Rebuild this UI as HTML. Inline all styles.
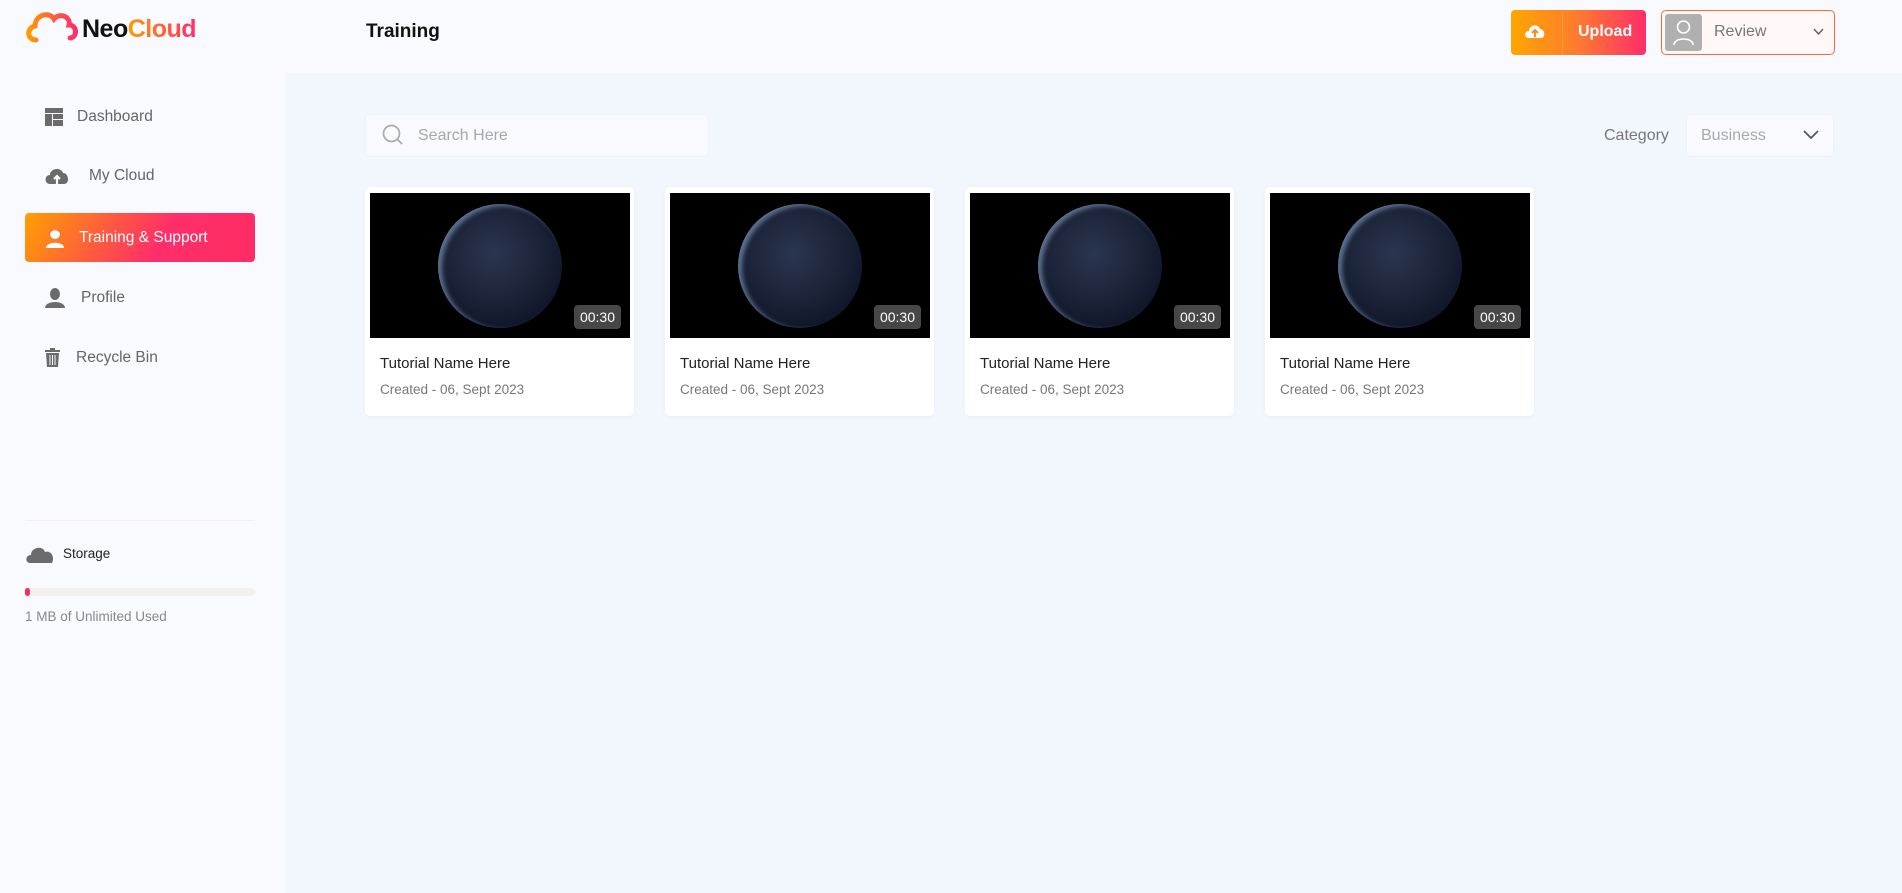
<!DOCTYPE html>
<html><head><meta charset="utf-8"><style>
*{margin:0;padding:0;box-sizing:border-box}
body{width:1902px;height:893px;background:#f8faff;font-family:"Liberation Sans",sans-serif;position:relative;overflow:hidden;color:#222}
.abs{position:absolute}
.main{left:285px;top:73px;width:1617px;height:820px;background:#f2f6fd}
.menu{left:45px;font-size:15.5px;color:#666;display:flex;align-items:center}
.menu svg{margin-right:14px}
.card{width:269px;height:229px;background:#fff;border-radius:5px;box-shadow:0 1px 4px rgba(0,0,0,.04);top:187px}
.img{left:5px;top:6px;width:260px;height:145px;background:#000;overflow:hidden}
.globe{position:absolute;left:68px;top:11px;width:124px;height:124px;border-radius:50%;background:radial-gradient(circle at 45% 40%,#2a3550 0%,#1c2439 45%,#10162a 75%,#050609 100%);box-shadow:4px 2px 5px rgba(150,180,220,.55) inset}
.badge{position:absolute;right:9px;bottom:9px;background:#474747;color:#fff;font-size:14px;padding:4px 6px;border-radius:4px}
.t{position:absolute;left:15px;top:168px;font-size:15px;color:#222}
.d{position:absolute;left:15px;top:195px;font-size:13.5px;color:#777}
</style></head><body>
<div class="abs main"></div>
<svg class="abs" style="left:24px;top:7px" width="56" height="38" viewBox="0 0 56 38"><defs><linearGradient id="lg" x1="0" x2="1"><stop offset="0" stop-color="#ff9a00"/><stop offset="1" stop-color="#ff2d6a"/></linearGradient></defs><path d="M12 33 C3 33 2 21 11 19 C11 8 25 4 30 12 C36 5 47 10 45 18 C53 18 54 30 46 31" fill="none" stroke="url(#lg)" stroke-width="5" stroke-linecap="round"/><path d="M14 30 H44" stroke="url(#lg)" stroke-width="4" opacity=".6"/></svg>
<div class="abs" style="left:82px;top:15px;font-size:25px;font-weight:bold;letter-spacing:-0.5px"><span style="color:#111">Neo</span><span style="background:linear-gradient(90deg,#ff9a00,#ff2d6a);-webkit-background-clip:text;color:transparent">Cloud</span></div>
<div class="abs" style="left:366px;top:21px;font-size:19px;font-weight:bold;color:#111">Training</div>
<div class="abs" style="left:1511px;top:10px;width:135px;height:45px;border-radius:4px;background:linear-gradient(90deg,#ffa600,#ff7a30 50%,#ff2d6a)"></div>
<div class="abs" style="left:1562px;top:10px;width:1px;height:45px;background:#f5a020"></div>
<svg class="abs" style="left:1524px;top:22px" width="22" height="18" viewBox="0 0 22 18"><path d="M5 16 C0 16 0 9 5 9 C5 3 14 1 16 7 C21 7 22 16 17 16 Z" fill="#fff"/><path d="M11 15 V9 M8 11 L11 8 L14 11" stroke="#ff8a20" stroke-width="2" fill="none"/></svg>
<div class="abs" style="left:1578px;top:23px;color:#fff;font-weight:bold;font-size:16px">Upload</div>
<div class="abs" style="left:1661px;top:10px;width:174px;height:45px;border:1.5px solid #ff6a3a;border-radius:5px;background:#fff8f6"></div>
<div class="abs" style="left:1665px;top:14px;width:37px;height:37px;background:#b0b0b0;border-radius:3px"></div>
<svg class="abs" style="left:1672px;top:19px" width="23" height="27" viewBox="0 0 23 27"><circle cx="11.5" cy="8" r="6" fill="none" stroke="#fff" stroke-width="1.6"/><path d="M2 26 C2 18 21 18 21 26" fill="none" stroke="#fff" stroke-width="1.6"/></svg>
<div class="abs" style="left:1714px;top:23px;font-size:16px;color:#777">Review</div>
<svg class="abs" style="left:1813px;top:28px" width="11" height="8" viewBox="0 0 11 8"><path d="M1 1 L5.5 6 L10 1" fill="none" stroke="#666" stroke-width="1.5"/></svg>
<div class="abs menu" style="top:108px"><svg width="18" height="18" viewBox="0 0 18 18" fill="#6b6b6b"><rect x="0" y="0" width="18" height="5"/><rect x="0" y="6" width="7" height="12"/><rect x="8" y="6" width="10" height="5"/><rect x="8" y="12" width="10" height="6"/></svg>Dashboard</div>
<div class="abs menu" style="top:167px"><svg width="24" height="18" viewBox="0 0 24 18"><path d="M5 17 C-1 17 -1 8 5 8 C5 1 16 0 18 6 C24 6 25 17 19 17 Z" fill="#6b6b6b"/><path d="M12 17 V10 M9 12 L12 9 L15 12" stroke="#f8faff" stroke-width="2.2" fill="none"/></svg><span style="margin-left:6px">My Cloud</span></div>
<div class="abs" style="left:25px;top:213px;width:230px;height:49px;border-radius:4px;background:linear-gradient(120deg,#ffa000 0%,#ff5a40 35%,#ff2d6a 60%,#ff2d62 100%)"></div>
<div class="abs menu" style="top:228px;color:#fff;font-size:15.5px"><svg width="20" height="20" viewBox="0 0 20 20" fill="#fff"><circle cx="10" cy="6" r="5"/><path d="M1 20 C1 13 19 13 19 20 Z"/><path d="M4 7 C4 0 16 0 16 7" fill="none" stroke="#ff6a30" stroke-width="1.3"/></svg><span>Training &amp; Support</span></div>
<div class="abs menu" style="top:288px"><svg width="20" height="20" viewBox="0 0 20 20" fill="#6b6b6b"><ellipse cx="10" cy="6" rx="5" ry="6"/><path d="M0 20 C0 12 20 12 20 20 Z"/></svg><span style="margin-left:2px">Profile</span></div>
<div class="abs menu" style="top:348px"><svg width="15" height="19" viewBox="0 0 15 19" fill="#6b6b6b"><rect x="0" y="2" width="15" height="2"/><rect x="5" y="0" width="5" height="2"/><path d="M1 5 H14 L13 19 H2 Z"/><path d="M5 7 V17 M7.5 7 V17 M10 7 V17" stroke="#f8faff" stroke-width="1"/></svg><span style="margin-left:2px">Recycle Bin</span></div>
<div class="abs" style="left:25px;top:520px;width:230px;height:1px;background:#eceff6"></div>
<svg class="abs" style="left:25px;top:545px" width="29" height="18" viewBox="0 0 29 18"><path d="M5 18 C0 18 0 10 6 10 C6 2 18 0 20 7 C26 5 30 12 27 18 Z" fill="#6b6b6b"/></svg>
<div class="abs" style="left:63px;top:546px;font-size:13.5px;color:#222">Storage</div>
<div class="abs" style="left:25px;top:588px;width:230px;height:8px;border-radius:4px;background:#f2f1f0"></div>
<div class="abs" style="left:25px;top:588px;width:5px;height:8px;border-radius:4px;background:#ff2d55"></div>
<div class="abs" style="left:25px;top:609px;font-size:13.5px;color:#888">1 MB of Unlimited Used</div>
<div class="abs" style="left:365px;top:114px;width:344px;height:43px;background:#f8faff;border-radius:5px;border:1px solid #eef2f9"></div>
<svg class="abs" style="left:382px;top:124px" width="22" height="22" viewBox="0 0 22 22"><circle cx="9.5" cy="9.5" r="8" fill="none" stroke="#aaa" stroke-width="1.7"/><path d="M15 15 L20 20" stroke="#aaa" stroke-width="1.7"/></svg>
<div class="abs" style="left:418px;top:127px;font-size:16px;color:#a8a8a8">Search Here</div>
<div class="abs" style="left:1604px;top:127px;font-size:16px;color:#777">Category</div>
<div class="abs" style="left:1686px;top:114px;width:148px;height:43px;background:#f8faff;border-radius:5px;border:1px solid #eef2f9"></div>
<div class="abs" style="left:1701px;top:127px;font-size:16px;color:#aaa">Business</div>
<svg class="abs" style="left:1803px;top:130px" width="16" height="10" viewBox="0 0 16 10"><path d="M1 1 L8 8 L15 1" fill="none" stroke="#555" stroke-width="1.7"/></svg>
<div class="abs card" style="left:365px"><div class="abs img"><div class="globe"></div><div class="badge">00:30</div></div><div class="t">Tutorial Name Here</div><div class="d">Created - 06, Sept 2023</div></div>
<div class="abs card" style="left:665px"><div class="abs img"><div class="globe"></div><div class="badge">00:30</div></div><div class="t">Tutorial Name Here</div><div class="d">Created - 06, Sept 2023</div></div>
<div class="abs card" style="left:965px"><div class="abs img"><div class="globe"></div><div class="badge">00:30</div></div><div class="t">Tutorial Name Here</div><div class="d">Created - 06, Sept 2023</div></div>
<div class="abs card" style="left:1265px"><div class="abs img"><div class="globe"></div><div class="badge">00:30</div></div><div class="t">Tutorial Name Here</div><div class="d">Created - 06, Sept 2023</div></div>
</body></html>
